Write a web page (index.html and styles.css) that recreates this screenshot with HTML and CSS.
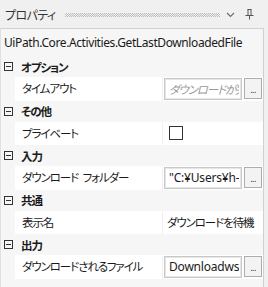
FILE: index.html
```html
<!DOCTYPE html>
<html lang="ja">
<head>
  <meta charset="UTF-8" />
  <title>プロパティ</title>
  <link rel="stylesheet" href="styles.css">
</head>
<body>
  <div class="titlebar">
    <span class="title">プロパティ</span>
    <span class="grip"></span>
    <svg class="chev" width="9" height="6" viewBox="0 0 9 6"><path d="M1 1 L4.5 4.5 L8 1" fill="none" stroke="#6f6f6f" stroke-width="1.2"/></svg>
    <svg class="pin" width="9" height="11" viewBox="0 0 9 11"><path d="M2.5 0.5 H6.5 M3 0.5 V6 M6 0.5 V6 M0.5 6.5 H8.5 M4.5 6.5 V10.5" fill="none" stroke="#555" stroke-width="1"/></svg>
  </div>

  <div class="panel">
    <div class="type">UiPath.Core.Activities.GetLastDownloadedFile</div>

    <div class="cat"><span class="toggle"></span>オプション</div>
    <div class="row">
      <div class="name">タイムアウト</div>
      <div class="value">
        <div class="field placeholder"><span class="clip">ダウンロードが完</span></div>
        <button class="more">...</button>
      </div>
    </div>

    <div class="cat"><span class="toggle"></span>その他</div>
    <div class="row">
      <div class="name">プライベート</div>
      <div class="value"><span class="check"></span></div>
    </div>

    <div class="cat"><span class="toggle"></span>入力</div>
    <div class="row">
      <div class="name">ダウンロード フォルダー</div>
      <div class="value">
        <div class="field"><span class="clip">"C:¥Users¥h-</span></div>
        <button class="more">...</button>
      </div>
    </div>

    <div class="cat"><span class="toggle"></span>共通</div>
    <div class="row">
      <div class="name">表示名</div>
      <div class="value"><span class="plain">ダウンロードを待機</span></div>
    </div>

    <div class="cat"><span class="toggle"></span>出力</div>
    <div class="row">
      <div class="name">ダウンロードされるファイル</div>
      <div class="value">
        <div class="field"><span class="clip">Downloadws</span></div>
        <button class="more">...</button>
      </div>
    </div>
  </div>
</body>
</html>
```

FILE: styles.css
```css
body {
  margin: 0;
  width: 268px;
  height: 287px;
  overflow: hidden;
  background: #f0f0f0;
  color: #1a1a1a;
  font-family: "Noto Sans CJK JP", "Noto Sans", sans-serif;
  font-size: 11.5px;
  letter-spacing: -1.1px;
  word-spacing: 3px;
  font-feature-settings: "palt";
}

.titlebar {
  height: 28px;
  display: flex;
  align-items: center;
  padding: 0 0 0 5px;
}

.title {
  color: #333;
  font-size: 12px;
  letter-spacing: -0.6px;
}

.grip {
  flex: 1;
  height: 4px;
  margin: 1px 6px 0 9px;
  background-image: conic-gradient(#bdbdbd 25%, transparent 0 50%, #bdbdbd 0 75%, transparent 0);
  background-size: 2px 2px;
}

.chev {
  margin-top: 2px;
}

.pin {
  margin: 0 14px 0 10px;
}

.panel {
  width: 262px;
  height: 258px;
  background: #f6f6f6;
  border-top: 1px solid #d0d0d0;
  border-right: 1px solid #d0d0d0;
  border-left: 1px solid #e0e0e0;
}

.type {
  height: 27px;
  line-height: 27px;
  padding-left: 3px;
  font-family: "Noto Sans", sans-serif;
  font-size: 12px;
  letter-spacing: -0.4px;
}

.cat {
  height: 21px;
  display: flex;
  align-items: center;
  font-weight: bold;
}

.toggle {
  position: relative;
  width: 7px;
  height: 7px;
  border: 1px solid #333;
  margin: 0 8px 0 3px;
}

.toggle::after {
  content: "";
  position: absolute;
  left: 1px;
  top: 3px;
  width: 5px;
  height: 1px;
  background: #333;
}

.row {
  height: 23.5px;
  margin-left: 14px;
  display: flex;
  background: #fff;
}

.name {
  width: 140px;
  padding-left: 7px;
  line-height: 23px;
  border-right: 1px solid #f0f0f0;
  white-space: nowrap;
  overflow: hidden;
}

.value {
  flex: 1;
  display: flex;
  align-items: center;
  padding-left: 1px;
  min-width: 0;
}

.field {
  width: 70px;
  height: 20px;
  line-height: 20px;
  border: 1px solid #c8c8c8;
  box-shadow: inset 0 0 0 1px #e6e6e6;
  padding: 0 2px 0 4px;
  white-space: nowrap;
  overflow: hidden;
  background: #fff;
  font-family: "Noto Sans", "Noto Sans CJK JP", sans-serif;
  font-size: 12px;
  letter-spacing: -0.2px;
}

.clip {
  display: block;
  overflow: hidden;
}

.placeholder {
  color: #9a9a9a;
  font-style: italic;
  font-family: "Noto Sans CJK JP", sans-serif;
  font-size: 11.5px;
  letter-spacing: -1.1px;
}

.more {
  width: 18px;
  height: 21px;
  margin-left: 2px;
  padding: 0;
  border: 1px solid #adadad;
  background: #f3f3f3;
  color: #333;
  font-size: 9px;
  letter-spacing: -0.5px;
  line-height: 21px;
  font-family: "Noto Sans", sans-serif;
}

.check {
  width: 12px;
  height: 12px;
  margin-left: 5px;
  border: 1px solid #333;
  background: #fff;
}

.plain {
  padding-left: 3px;
  white-space: nowrap;
}
```
